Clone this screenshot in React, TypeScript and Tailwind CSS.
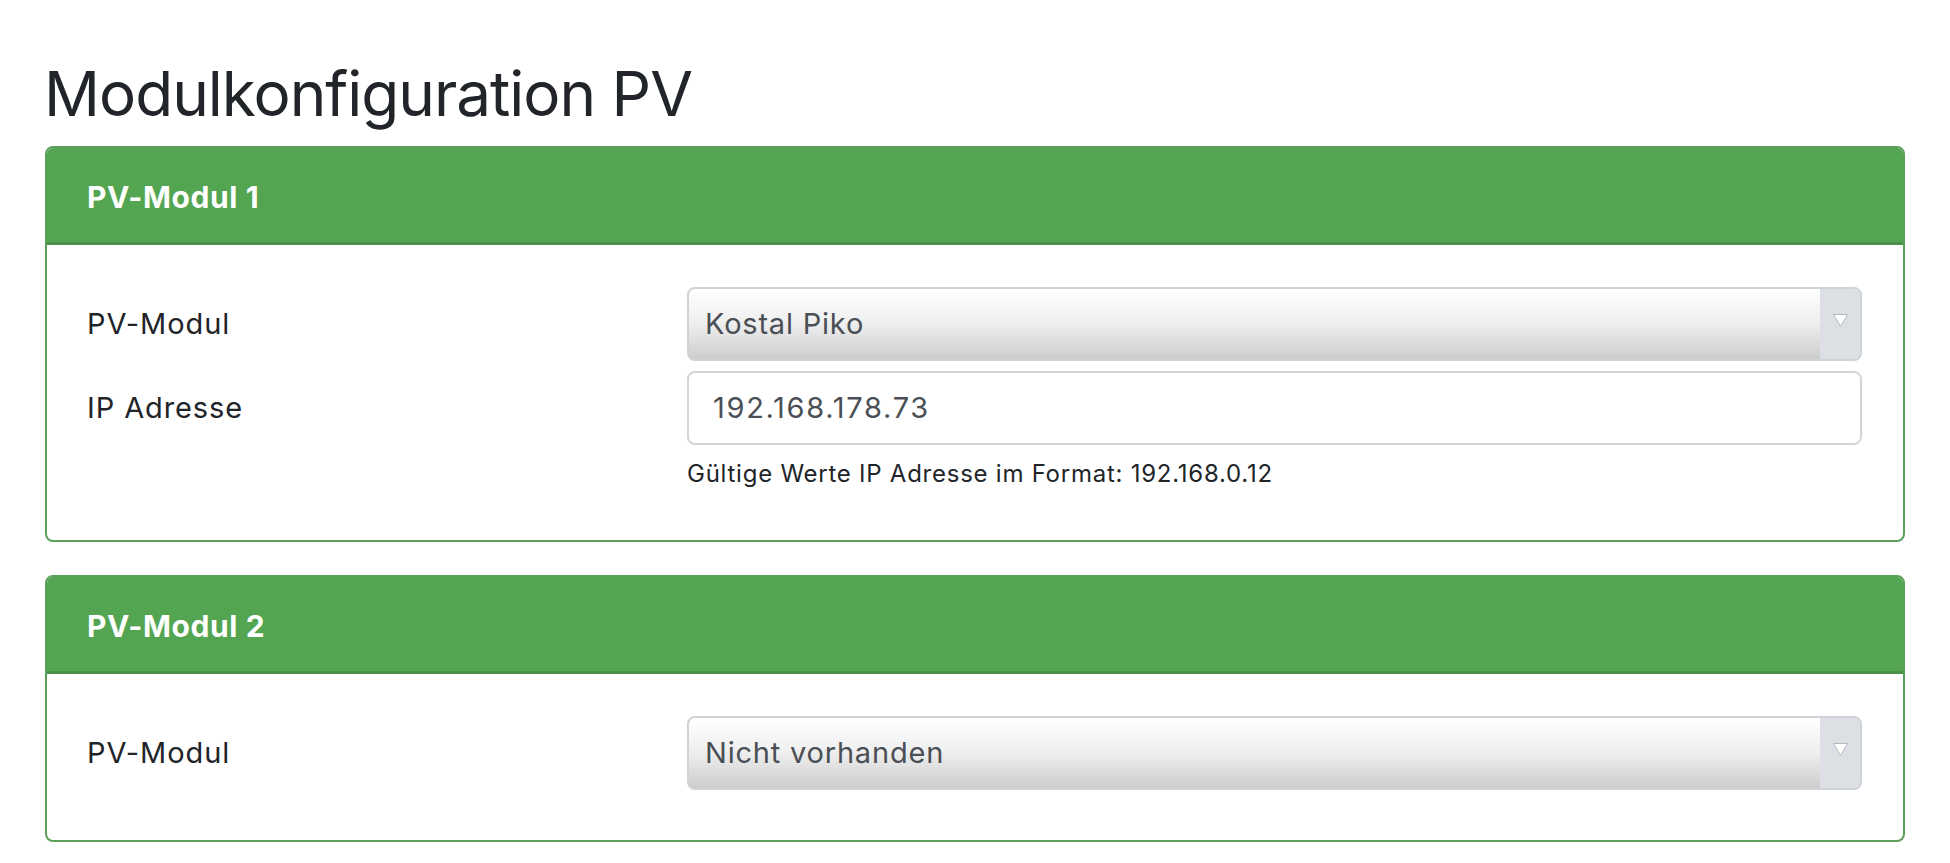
import React from "react";

const font = { fontFamily: "Inter, 'Noto Sans', sans-serif" };

function SelectBox({ value }: { value: string }) {
  return (
    <div className="flex h-[74px] items-stretch overflow-hidden rounded-[8px] border-2 border-[#cfd3d8] bg-linear-to-b from-white via-[#eeeeee] to-[#cdcdcd]">
      <div className="flex flex-1 items-center pl-[16px] text-[29px] leading-[36px] tracking-[0.8px] text-[#4a4f55]">
        {value}
      </div>
      <div className="flex w-[40px] items-center justify-center bg-[#dcdfe3]">
        <svg width="17" height="15" viewBox="0 0 17 15" className="-mt-[7px]">
          <path d="M1.5 1.5 L15.5 1.5 L8.5 13.5 Z" fill="#ffffff" stroke="#b4b8be" strokeWidth="1" strokeLinejoin="round" />
        </svg>
      </div>
    </div>
  );
}

function TextBox({ value }: { value: string }) {
  return (
    <div className="flex h-[74px] items-center rounded-[8px] border-2 border-[#d3d6da] bg-white pl-[24px] text-[29px] leading-[36px] tracking-[1.7px] text-[#4a4f55]">
      {value}
    </div>
  );
}

function Card({ title, children }: { title: string; children: React.ReactNode }) {
  return (
    <section className="overflow-hidden rounded-[8px] border-2 border-[#5b9f5a] bg-white">
      <div className="border-b-[3px] border-[#4b904a] bg-[#53a552] px-[40px] pt-[31px] pb-[27px]">
        <h2 className="text-[30px] font-bold leading-[36px] tracking-[0.6px] text-white">{title}</h2>
      </div>
      {children}
    </section>
  );
}

export default function App() {
  return (
    <div className="min-h-screen bg-white px-[45px] text-[#212529]" style={font}>
      <h1 className="-ml-[1px] pt-[57px] pb-[15px] text-[62px] font-normal leading-[74px] tracking-[-1px]">
        Modulkonfiguration PV
      </h1>

      <Card title="PV-Modul 1">
        <div className="grid grid-cols-[600px_1fr] items-center gap-y-[10px] pt-[42px] pb-[51px] pl-[40px] pr-[41px]">
          <label className="text-[29px] leading-[36px] tracking-[0.9px]">PV-Modul</label>
          <SelectBox value="Kostal Piko" />
          <label className="text-[29px] leading-[36px] tracking-[0.9px]">IP Adresse</label>
          <TextBox value="192.168.178.73" />
          <div />
          <p className="mt-[4px] text-[24px] leading-[30px] tracking-[0.75px] text-[#212529]">
            Gültige Werte IP Adresse im Format: 192.168.0.12
          </p>
        </div>
      </Card>

      <div className="h-[33px]" />

      <Card title="PV-Modul 2">
        <div className="grid grid-cols-[600px_1fr] items-center pt-[42px] pb-[50px] pl-[40px] pr-[41px]">
          <label className="text-[29px] leading-[36px] tracking-[0.9px]">PV-Modul</label>
          <SelectBox value="Nicht vorhanden" />
        </div>
      </Card>
    </div>
  );
}
